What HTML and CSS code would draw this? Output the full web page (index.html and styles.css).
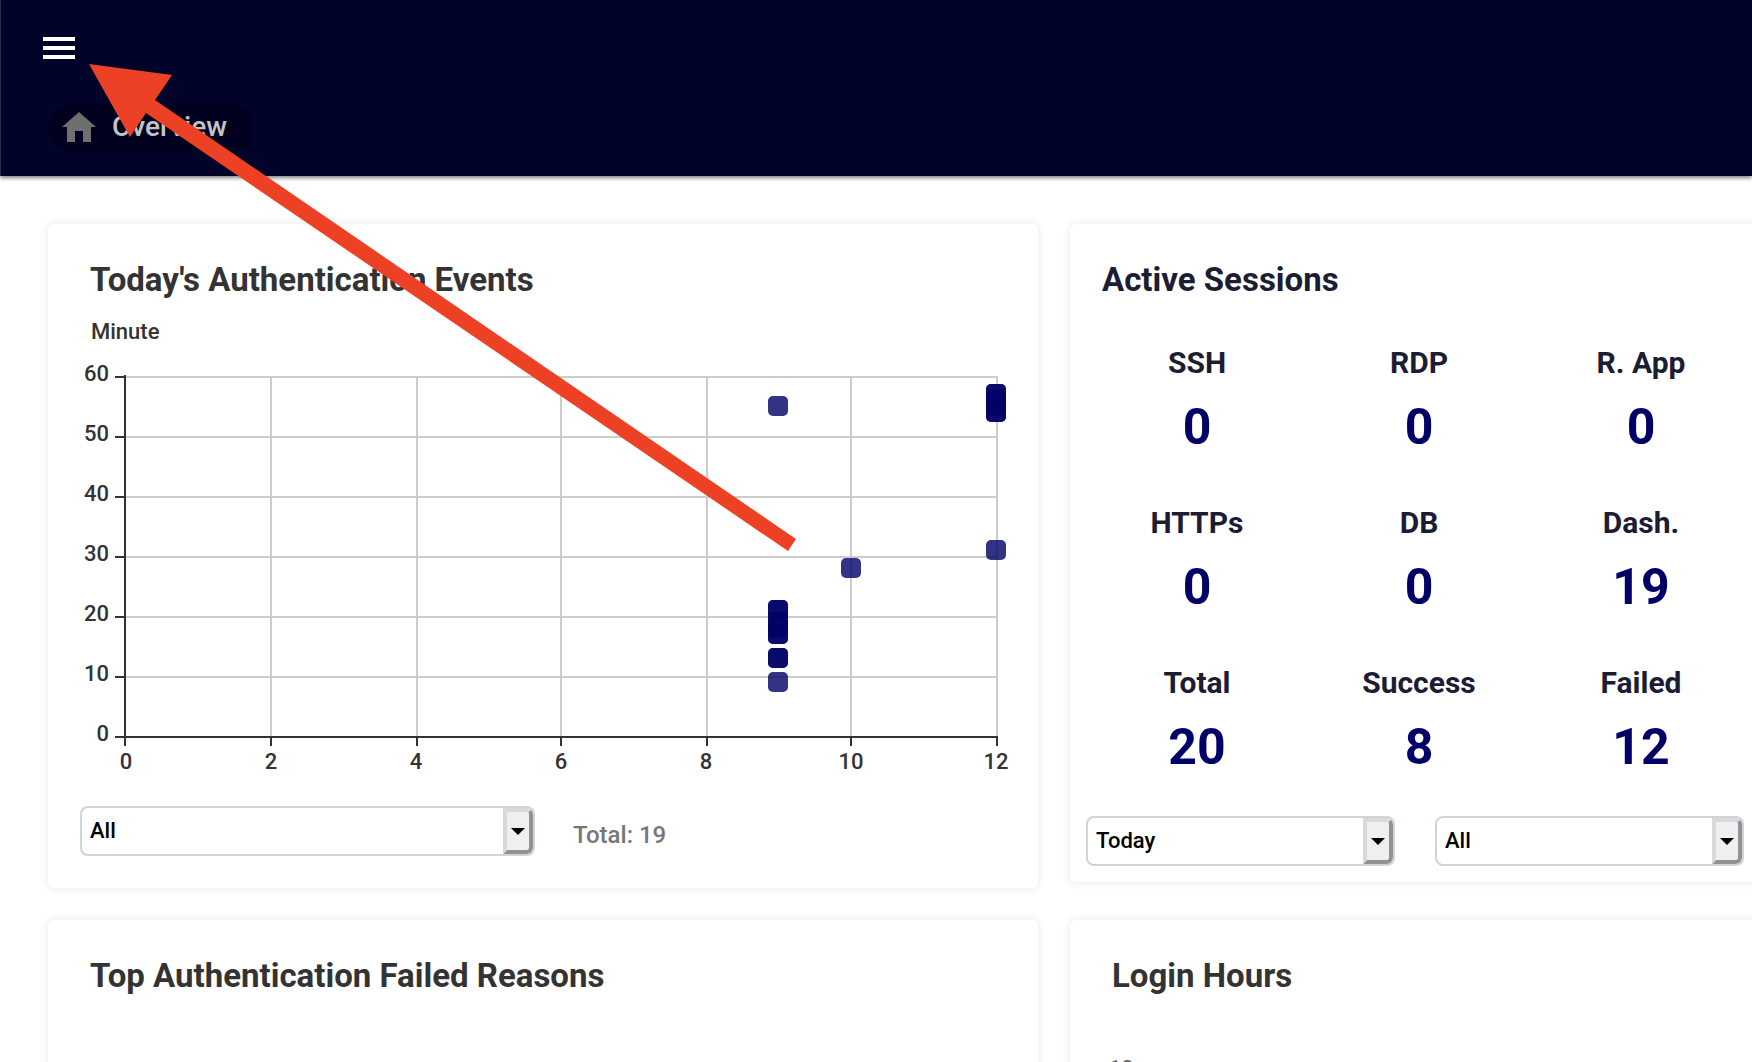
FILE: index.html
```html
<!DOCTYPE html>
<html lang="en">
<head>
<meta charset="utf-8">
<meta name="viewport" content="width=device-width, initial-scale=1">
<title>Overview</title>
<link rel="stylesheet" href="styles.css">
</head>
<body>
<header class="topbar">
  <button class="menu-button" type="button" aria-label="Menu">
    <svg width="32" height="22" viewBox="0 0 32 22" aria-hidden="true"><path d="M0 0h32v4H0zM0 9h32v4H0zM0 18h32v4H0z" fill="#fff"/></svg>
  </button>
  <nav aria-label="Breadcrumb">
    <a class="crumb" href="#overview">
      <svg width="34" height="30" viewBox="0 0 34 30" aria-hidden="true"><path d="M17 0 34 15H29V30H21V19H13V30H5V15H0z" fill="#6f6f6f"/></svg>
      <span>Overview</span>
    </a>
  </nav>
</header>

<main class="dashboard">
  <section class="card events">
    <h2 class="title">Today's Authentication Events</h2>
    <svg class="chart" viewBox="0 0 990 466" role="img" aria-label="Authentication events by hour and minute">
      <g class="grid-lines">
        <path d="M77 59H949M77 119H949M77 179H949M77 239H949M77 299H949M77 359H949"/>
        <path d="M223 58V418M369 58V418M513 58V418M659 58V418M803 58V418M949 58V418"/>
      </g>
      <g class="axis-lines">
        <path d="M77 57V428M67 419H950"/>
        <path d="M67 59H77M67 119H77M67 179H77M67 239H77M67 299H77M67 359H77"/>
        <path d="M223 419V428M369 419V428M513 419V428M659 419V428M803 419V428M949 419V428"/>
      </g>
      <text class="axis-name" x="43" y="21">Minute</text>
      <g class="tick-labels tick-labels-y">
        <text x="61" y="63">60</text><text x="61" y="123">50</text><text x="61" y="183">40</text><text x="61" y="243">30</text><text x="61" y="303">20</text><text x="61" y="363">10</text><text x="61" y="423">0</text>
      </g>
      <g class="tick-labels tick-labels-x">
        <text x="78" y="451">0</text><text x="223" y="451">2</text><text x="368" y="451">4</text><text x="513" y="451">6</text><text x="658" y="451">8</text><text x="803" y="451">10</text><text x="948" y="451">12</text>
      </g>
      <g class="points">
        <rect x="720" y="78" width="20" height="20" rx="5"/>
        <rect x="720" y="282" width="20" height="20" rx="5"/><rect x="720" y="282" width="20" height="20" rx="5"/>
        <rect x="720" y="294" width="20" height="20" rx="5"/><rect x="720" y="294" width="20" height="20" rx="5"/>
        <rect x="720" y="300" width="20" height="20" rx="5"/>
        <rect x="720" y="306" width="20" height="20" rx="5"/><rect x="720" y="306" width="20" height="20" rx="5"/>
        <rect x="720" y="330" width="20" height="20" rx="5"/><rect x="720" y="330" width="20" height="20" rx="5"/>
        <rect x="720" y="354" width="20" height="20" rx="5"/>
        <rect x="793" y="240" width="20" height="20" rx="5"/>
        <rect x="938" y="66" width="20" height="20" rx="5"/><rect x="938" y="66" width="20" height="20" rx="5"/>
        <rect x="938" y="72" width="20" height="20" rx="5"/><rect x="938" y="78" width="20" height="20" rx="5"/>
        <rect x="938" y="84" width="20" height="20" rx="5"/><rect x="938" y="84" width="20" height="20" rx="5"/>
        <rect x="938" y="222" width="20" height="20" rx="5"/>
      </g>
    </svg>
    <div class="event-filter">
      <div class="picker">
        <select aria-label="Event type"><option>All</option></select>
        <span class="picker-arrow"></span>
      </div>
      <span class="event-total">Total: 19</span>
    </div>
  </section>

  <section class="card sessions">
    <h2 class="title">Active Sessions</h2>
    <dl class="stats">
      <div class="stat"><dt>SSH</dt><dd>0</dd></div>
      <div class="stat"><dt>RDP</dt><dd>0</dd></div>
      <div class="stat"><dt>R. App</dt><dd>0</dd></div>
      <div class="stat"><dt>HTTPs</dt><dd>0</dd></div>
      <div class="stat"><dt>DB</dt><dd>0</dd></div>
      <div class="stat"><dt>Dash.</dt><dd>19</dd></div>
      <div class="stat"><dt>Total</dt><dd>20</dd></div>
      <div class="stat"><dt>Success</dt><dd>8</dd></div>
      <div class="stat"><dt>Failed</dt><dd>12</dd></div>
    </dl>
    <div class="session-filter">
      <div class="picker">
        <select aria-label="Period"><option>Today</option></select>
        <span class="picker-arrow"></span>
      </div>
      <div class="picker">
        <select aria-label="Session type"><option>All</option></select>
        <span class="picker-arrow"></span>
      </div>
    </div>
  </section>

  <section class="card">
    <h2 class="title">Top Authentication Failed Reasons</h2>
  </section>

  <section class="card">
    <h2 class="title">Login Hours</h2>
    <p class="hours-axis">10</p>
  </section>
</main>

<svg class="pointer" width="710" height="490" viewBox="0 0 710 490" aria-hidden="true"><path d="M0 0 83 11 66 36 707 475 699 487 57 49 41 73z" fill="#ed4126"/></svg>
</body>
</html>
```
FILE: styles.css
```css
* { box-sizing: border-box; }

body {
  margin: 0;
  height: 100vh;
  overflow: hidden;
  position: relative;
  background: #fff;
  color: #333;
  font-family: Roboto, "Liberation Sans", sans-serif;
}

.topbar {
  display: flex;
  flex-direction: column;
  align-items: flex-start;
  gap: 40px;
  padding: 32px 43px 24px;
  background: #020329;
  box-shadow: inset 1px 0 #2c2c4c, 0 2px 4px rgba(0, 0, 0, 0.5);
}

.menu-button {
  display: flex;
  padding: 5px 0;
  border: 0;
  background: none;
}

.crumb {
  display: flex;
  align-items: center;
  gap: 16px;
  height: 48px;
  margin-left: 5px;
  padding: 0 26px 2px 14px;
  border-radius: 24px;
  background: #01011f;
  color: #c4c4c4;
  font-size: 28px;
  font-weight: 500;
  line-height: 44px;
  text-decoration: none;
}

.dashboard {
  display: grid;
  grid-template-columns: 990px 1fr;
  gap: 32px;
  margin-right: -24px;
  padding: 48px 0 0 48px;
}

.card {
  min-height: 180px;
  padding: 35px 0 0;
  border-radius: 6px;
  background: #fff;
  box-shadow: 0 0 10px rgba(0, 0, 0, 0.1);
}

.title {
  margin: 0;
  padding-left: 42px;
  font-size: 33px;
  font-weight: 700;
  line-height: 42px;
}

.events { padding-bottom: 32px; }

.chart {
  display: block;
  width: 100%;
  margin-top: 17px;
}

.grid-lines { stroke: #ccc; stroke-width: 2; fill: none; }
.axis-lines { stroke: #333; stroke-width: 2; fill: none; }
.axis-name,
.tick-labels { font-size: 22px; font-weight: 500; fill: #333; }
.tick-labels-y { text-anchor: end; }
.tick-labels-x { text-anchor: middle; }
.points { fill: #000066; fill-opacity: 0.8; }

.event-filter {
  display: grid;
  grid-template-columns: 455px 1fr;
  align-items: center;
  gap: 38px;
  padding: 22px 32px 0;
}

.event-total {
  padding-top: 8px;
  color: #777;
  font-size: 24px;
  font-weight: 500;
}

.picker {
  display: flex;
  height: 50px;
  overflow: hidden;
  border: 2px solid #ced4da;
  border-radius: 8px;
  background: #fff;
}

.picker select {
  flex: 1;
  min-width: 0;
  padding: 0 8px 2px;
  border: 0;
  background: none;
  color: #000;
  font: 500 22px Roboto, "Liberation Sans", sans-serif;
  appearance: none;
}

.picker-arrow {
  display: flex;
  align-items: center;
  justify-content: center;
  width: 30px;
  border: 4px solid;
  border-color: #d9d9d9 #929292 #929292 #d9d9d9;
  border-radius: 0 6px 6px 0;
  background: #efefef;
}

.picker-arrow::before {
  content: "";
  border: 7px solid transparent;
  border-top-color: #000;
  border-bottom: 0;
}

.sessions {
  align-self: start;
  color: #1c1c33;
}

.sessions .title { padding-left: 32px; }

.stats {
  display: grid;
  grid-template-columns: repeat(3, 222px);
  row-gap: 42px;
  margin: 38px 0 0 16px;
  text-align: center;
  font-weight: 700;
}

.stat dt { font-size: 30px; line-height: 48px; }

.stat dd {
  margin: 10px 0 0;
  color: #000066;
  font-size: 50px;
  line-height: 60px;
}

.session-filter {
  display: grid;
  grid-template-columns: repeat(2, 309px);
  gap: 40px;
  padding: 39px 16px 16px;
}

.hours-axis {
  margin: 59px 0 0;
  padding-left: 39px;
  color: #666;
  font-size: 22px;
  line-height: 26px;
}

.pointer {
  position: absolute;
  top: 64px;
  left: 89px;
}
```
